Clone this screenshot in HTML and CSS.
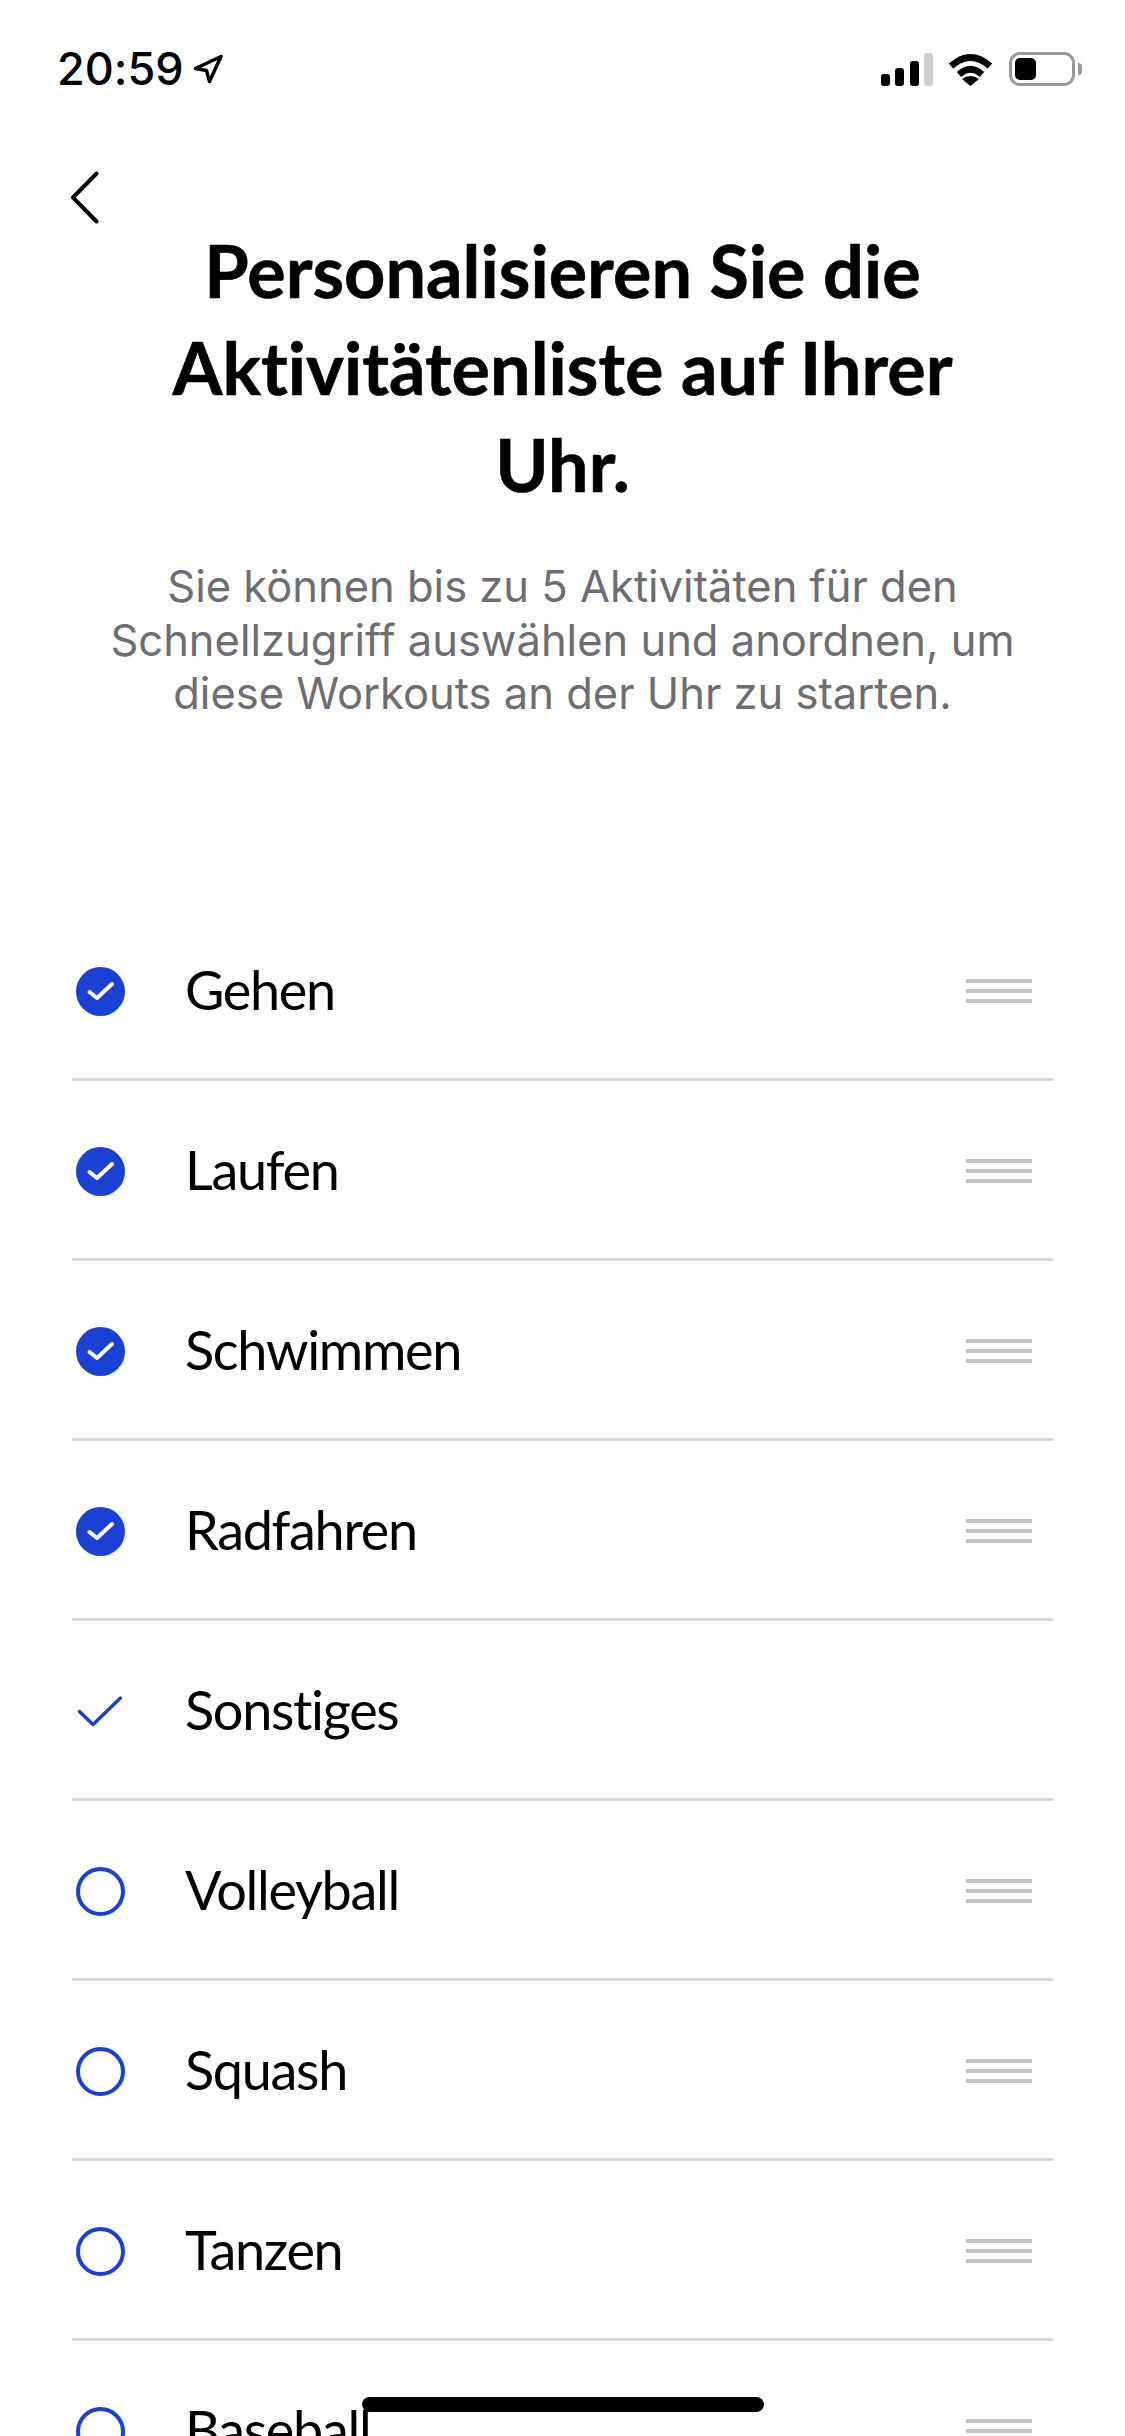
FILE: index.html
```html
<!DOCTYPE html>
<html>
<head>
	<meta charset="utf-8">
	<title>Aktivitätenliste</title>
	<link rel="stylesheet" href="styles.css">
</head>
<body>
	<div class="status">
		<div class="status-left">
			<span class="time">20:59</span>
			<svg class="arrow" viewBox="0 0 30 30"><path d="M28 2.5 2.5 14.500l11 2 3 11z"/></svg>
		</div>
		<div class="status-right">
			<div class="signal"><i class="b1"></i><i class="b2"></i><i class="b3"></i><i class="b4"></i></div>
			<svg class="wifi" viewBox="0 0 45 33">
				<path class="wifi-arc" d="M3 13Q22.5-4 42 13"/>
				<path class="wifi-arc" d="M11 21.5Q22.5 11 34 21.5"/>
				<path d="M14 26Q22.500 20 31 26L22.500 33z"/>
			</svg>
			<div class="battery"><div class="battery-fill"></div></div>
			<div class="battery-nub"></div>
		</div>
	</div>

	<a class="back" href="#">
		<svg viewBox="0 0 29 53"><path d="M26.500 2.500 3 26.500l23.500 24"/></svg>
	</a>

	<h1>Personalisieren Sie die<br>Aktivitätenliste auf Ihrer<br>Uhr.</h1>
	<p class="intro">Sie können bis zu 5 Aktivitäten für den<br>Schnellzugriff auswählen und anordnen, um<br>diese Workouts an der Uhr zu starten.</p>

	<ul class="list">
		<li class="row">
			<svg class="mark" viewBox="0 0 49 49"><circle class="disc" cx="24.500" cy="24.500" r="24.500"/><path class="tick" d="M13.500 25 21 31 36 17"/></svg>
			<span class="name">Gehen</span>
			<div class="handle"><i></i><i></i><i></i></div>
		</li>
		<li class="row">
			<svg class="mark" viewBox="0 0 49 49"><circle class="disc" cx="24.500" cy="24.500" r="24.500"/><path class="tick" d="M13.500 25 21 31 36 17"/></svg>
			<span class="name">Laufen</span>
			<div class="handle"><i></i><i></i><i></i></div>
		</li>
		<li class="row">
			<svg class="mark" viewBox="0 0 49 49"><circle class="disc" cx="24.500" cy="24.500" r="24.500"/><path class="tick" d="M13.500 25 21 31 36 17"/></svg>
			<span class="name">Schwimmen</span>
			<div class="handle"><i></i><i></i><i></i></div>
		</li>
		<li class="row">
			<svg class="mark" viewBox="0 0 49 49"><circle class="disc" cx="24.500" cy="24.500" r="24.500"/><path class="tick" d="M13.500 25 21 31 36 17"/></svg>
			<span class="name">Radfahren</span>
			<div class="handle"><i></i><i></i><i></i></div>
		</li>
		<li class="row">
			<svg class="mark" viewBox="0 0 49 49"><path class="plain-tick" d="M3.500 24.500 17 37.500 44.500 11"/></svg>
			<span class="name">Sonstiges</span>
		</li>
		<li class="row">
			<svg class="mark" viewBox="0 0 49 49"><circle class="ring" cx="24.500" cy="24.500" r="22.500"/></svg>
			<span class="name">Volleyball</span>
			<div class="handle"><i></i><i></i><i></i></div>
		</li>
		<li class="row">
			<svg class="mark" viewBox="0 0 49 49"><circle class="ring" cx="24.500" cy="24.500" r="22.500"/></svg>
			<span class="name">Squash</span>
			<div class="handle"><i></i><i></i><i></i></div>
		</li>
		<li class="row">
			<svg class="mark" viewBox="0 0 49 49"><circle class="ring" cx="24.500" cy="24.500" r="22.500"/></svg>
			<span class="name">Tanzen</span>
			<div class="handle"><i></i><i></i><i></i></div>
		</li>
		<li class="row">
			<svg class="mark" viewBox="0 0 49 49"><circle class="ring" cx="24.500" cy="24.500" r="22.500"/></svg>
			<span class="name">Baseball</span>
			<div class="handle"><i></i><i></i><i></i></div>
		</li>
	</ul>

	<div class="home-bar"></div>
</body>
</html>
```

FILE: styles.css
```css
html, body {
	margin: 0;
	height: 2436px;
	overflow: hidden;
	background: #fff;
	color: #000;
	font-family: Lato, "Noto Sans", Arial, sans-serif;
	font-variant-ligatures: none;
}

/* status bar */
.status {
	display: flex;
	justify-content: space-between;
	align-items: center;
	height: 34px;
	padding: 52px 43px 0 57px;
}
.status-left {
	display: flex;
	align-items: center;
	gap: 9px;
}
.time {
	font-family: Inter, "Liberation Sans", sans-serif;
	font-size: 45px;
	font-weight: 500;
	line-height: 34px;
}
.arrow {
	width: 30px;
	height: 30px;
}
.arrow path {
	fill: none;
	stroke: #000;
	stroke-width: 3.5;
	stroke-linejoin: round;
}
.status-right {
	display: flex;
	align-items: center;
}
.signal {
	display: flex;
	align-items: flex-end;
	gap: 5.500px;
	height: 33px;
	margin-right: 15px;
}
.signal i {
	width: 9px;
	background: #000;
	border-radius: 3px;
}
.signal .b1 { height: 12px; }
.signal .b2 { height: 18px; }
.signal .b3 { height: 25px; }
.signal .b4 { height: 33px; background: #cfcfcf; }
.wifi {
	width: 45px;
	height: 33px;
	margin-right: 16px;
}
.wifi-arc {
	fill: none;
	stroke: #000;
	stroke-width: 6.500;
}
.battery {
	box-sizing: border-box;
	width: 66px;
	height: 34px;
	padding: 3px;
	border: 3px solid #999;
	border-radius: 11px;
}
.battery-fill {
	width: 21px;
	height: 22px;
	background: #000;
	border-radius: 5px;
}
.battery-nub {
	width: 4px;
	height: 12px;
	margin-left: 3px;
	background: #999;
	border-radius: 0 4px 4px 0;
}

.back {
	display: block;
	width: 29px;
	height: 53px;
	margin: 85px 0 0 70px;
}
.back svg {
	display: block;
	width: 29px;
	height: 53px;
}
.back path {
	fill: none;
	stroke: #000;
	stroke-width: 4;
	stroke-linecap: round;
	stroke-linejoin: round;
}

h1 {
	margin: 0;
	margin-top: -2px;
	font-size: 72px;
	font-weight: 700;
	line-height: 97px;
	text-align: center;
	-webkit-text-stroke: 0.6px #000;
}
.intro {
	margin: 47px 0 0;
	color: #6e6e72;
	font-family: Inter, "Liberation Sans", Arial, sans-serif;
	font-size: 43.500px;
	line-height: 53.500px;
	text-align: center;
}

.list {
	list-style: none;
	margin: 180px 72px 0;
	padding: 0;
}
.row {
	display: flex;
	align-items: center;
	box-sizing: border-box;
	height: 180px;
	padding: 5px 21px 0 4px;
	border-bottom: 3px solid #d9d9d9;
}
.mark {
	width: 49px;
	height: 49px;
	flex: none;
}
.disc { fill: #1a41d4; }
.tick {
	fill: none;
	stroke: #fff;
	stroke-width: 4;
	stroke-linecap: round;
	stroke-linejoin: round;
}
.plain-tick {
	fill: none;
	stroke: #1a41d4;
	stroke-width: 3.500;
	stroke-linecap: round;
	stroke-linejoin: round;
}
.ring {
	fill: none;
	stroke: #1a41d4;
	stroke-width: 4;
}
.name {
	flex: 1;
	margin: 0 0 4px 60px;
	font-size: 54px;
	line-height: 70px;
	letter-spacing: -1.300px;
}
.handle {
	display: flex;
	flex-direction: column;
	gap: 6px;
	width: 66px;
	margin-bottom: 2px;
}
.handle i {
	height: 4px;
	background: #c4c4c8;
}

.home-bar {
	position: absolute;
	left: 362px;
	top: 2397px;
	width: 402px;
	height: 15px;
	background: #000;
	border-radius: 8px;
}
```
